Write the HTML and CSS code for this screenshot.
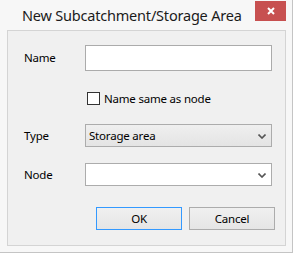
FILE: index.html
```html
<!DOCTYPE html>
<html lang="en">
<head>
    <meta charset="UTF-8">
    <title>New Subcatchment/Storage Area</title>
    <link rel="stylesheet" href="styles.css">
</head>
<body>
    <div class="window">
        <div class="titlebar">
            <span class="title">New Subcatchment/Storage Area</span>
            <button class="close-button" aria-label="Close">
                <svg width="8" height="8" viewBox="0 0 8 8">
                    <path d="M1 1 L7 7 M7 1 L1 7" stroke="#fff" stroke-width="2" fill="none"/>
                </svg>
            </button>
        </div>

        <div class="client">
            <div class="row row-name">
                <label class="field-label" for="name">Name</label>
                <input class="text-input" id="name" type="text">
            </div>

            <div class="row row-check">
                <span class="check-box"></span>
                <span class="check-label">Name same as node</span>
            </div>

            <div class="row row-type">
                <span class="field-label">Type</span>
                <div class="combo combo-list">
                    <span>Storage area</span>
                    <svg class="chevron" width="8" height="5" viewBox="0 0 8 5">
                        <path d="M0.5 0.5 L4 4 L7.5 0.5" stroke="#555" stroke-width="1.6" fill="none"/>
                    </svg>
                </div>
            </div>

            <div class="row row-node">
                <span class="field-label">Node</span>
                <div class="combo combo-edit">
                    <span></span>
                    <svg class="chevron" width="8" height="5" viewBox="0 0 8 5">
                        <path d="M0.5 0.5 L4 4 L7.5 0.5" stroke="#555" stroke-width="1.6" fill="none"/>
                    </svg>
                </div>
            </div>

            <div class="buttons">
                <button class="push-button default">OK</button>
                <button class="push-button">Cancel</button>
            </div>
        </div>
    </div>
</body>
</html>
```

FILE: styles.css
```css
* {
    margin: 0;
    padding: 0;
    box-sizing: border-box;
}

body {
    font-family: "Noto Sans", "Open Sans", sans-serif;
    font-size: 11.5px;
    letter-spacing: -0.2px;
    color: #000;
    background: #f7f7f7;
}

.window {
    width: 293px;
    height: 253px;
    background: #f7f7f7;
    border-right: 1px solid #c4c4c4;
    border-bottom: 1px solid #c4c4c4;
    display: flex;
    flex-direction: column;
}

.titlebar {
    height: 30px;
    display: flex;
    align-items: flex-start;
}

.title {
    font-size: 14.5px;
    letter-spacing: -0.2px;
    line-height: 30px;
    padding-left: 22px;
    white-space: nowrap;
    color: #1b1b1b;
}

.close-button {
    flex-shrink: 0;
    margin-left: auto;
    margin-top: 1px;
    margin-right: 6px;
    width: 31px;
    height: 20px;
    border: none;
    background: #c75050;
    display: flex;
    align-items: center;
    justify-content: center;
}

.client {
    margin: 0 6px 0 7px;
    height: 216px;
    background: #f0f0f0;
    border: 1px solid #d4d4d4;
    padding: 14px 0 0 16px;
}

.row {
    display: flex;
    align-items: center;
}

.field-label {
    width: 61px;
    line-height: 16px;
}

.text-input {
    width: 187px;
    height: 26px;
    border: 1px solid #ababab;
    background: #fff;
    outline: none;
}

.row-check {
    margin-top: 21px;
    padding-left: 63px;
    height: 13px;
}

.check-box {
    width: 13px;
    height: 13px;
    border: 1px solid #333;
    background: #fff;
}

.check-label {
    margin-left: 4px;
    line-height: 13px;
}

.row-type {
    margin-top: 19px;
}

.row-node {
    margin-top: 16px;
}

.combo {
    width: 187px;
    height: 23px;
    border: 1px solid #acacac;
    display: flex;
    align-items: center;
    justify-content: space-between;
    padding: 0 5px 0 3px;
}

.combo-list {
    background: linear-gradient(#efefef, #e4e4e4);
}

.combo-edit {
    background: #fff;
}

.chevron {
    margin-top: 1px;
}

.buttons {
    margin-top: 21px;
    padding-right: 10px;
    display: flex;
    justify-content: flex-end;
    gap: 7px;
}

.push-button {
    width: 86px;
    height: 23px;
    font-family: inherit;
    font-size: 11.5px;
    letter-spacing: inherit;
    color: #000;
    border: 1px solid #acacac;
    background: linear-gradient(#f0f0f0, #e5e5e5);
}

.push-button.default {
    border-color: #3399ff;
}
```
